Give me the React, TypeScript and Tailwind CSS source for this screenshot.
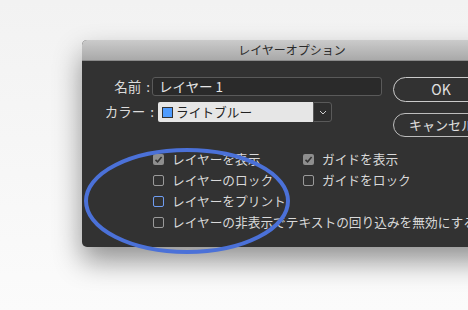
import React from 'react';

const font = { fontFamily: '"Noto Sans CJK JP", "Noto Sans", sans-serif' };

interface CheckProps {
    label: string;
    checked?: boolean;
    focused?: boolean;
}

const Check: React.FC<CheckProps> = ({ label, checked, focused }) => (
    <div className="flex items-center h-[21px] whitespace-nowrap">
        {checked ? (
            <span className="w-[11px] h-[11px] rounded-[2px] bg-[#8e8e8e] flex items-center justify-center flex-shrink-0">
                <svg width="9" height="9" viewBox="0 0 9 9">
                    <polyline points="1.5,4.8 3.6,6.8 7.6,2" fill="none" stroke="#333" strokeWidth="1.6" />
                </svg>
            </span>
        ) : (
            <span className={`w-[11px] h-[11px] rounded-[2px] border flex-shrink-0 ${focused ? 'border-[#6f9cf0]' : 'border-[#9a9a9a]'}`} />
        )}
        <span className="ml-[8px] text-[12.7px] text-[#d9d9d9] leading-none">{label}</span>
    </div>
);

const Label: React.FC<{ text: string; width: string }> = ({ text, width }) => (
    <span className={`${width} flex justify-end items-center text-[13.5px] text-[#dcdcdc] leading-none whitespace-nowrap`}>
        {text}
        <span className="ml-[5px]">:</span>
    </span>
);

export default function App() {
    return (
        <div className="relative w-[468px] h-[310px] overflow-hidden bg-gradient-to-b from-[#f2f2f2] to-[#fbfbfb] pl-[82px] pt-[40px]" style={font}>
            <div className="w-[420px] h-[207px] flex-shrink-0 rounded-[5px] overflow-hidden bg-[#323232] shadow-[0_14px_28px_rgba(0,0,0,0.42)] flex flex-col">
                <div className="h-[21px] bg-gradient-to-b from-[#cbcbcb] to-[#a9a9a9] border-b border-[#8a8a8a] flex items-center justify-center text-[12px] text-[#2b2b2b]">
                    レイヤーオプション
                </div>
                <div className="flex flex-1">
                    <div className="w-[311px] flex-shrink-0 pl-[24px]">
                        <div className="flex items-center h-[19px] mt-[16px]">
                            <Label text="名前" width="w-[44px]" />
                            <div className="ml-[2px] w-[230px] h-[19px] rounded-[3px] border border-[#5a5a5a] bg-[#2a2a2a] flex items-center px-[6px] text-[13.5px] text-[#e6e6e6] whitespace-nowrap">
                                レイヤー 1
                            </div>
                        </div>
                        <div className="flex items-center h-[20px] mt-[6px]">
                            <Label text="カラー" width="w-[48px]" />
                            <div className="ml-[4px] flex h-[20px]">
                                <div className="w-[155px] bg-[#e6e6e6] rounded-l-[2px] flex items-center pl-[4px]">
                                    <span className="w-[11px] h-[11px] bg-[#4f9cff] border border-[#333]" />
                                    <span className="ml-[3px] text-[12.7px] text-[#222] leading-none">ライトブルー</span>
                                </div>
                                <div className="w-[19px] border border-[#5a5a5a] rounded-r-[3px] bg-[#2e2e2e] flex items-center justify-center">
                                    <svg width="8" height="5" viewBox="0 0 8 5">
                                        <polyline points="1,1 4,4 7,1" fill="none" stroke="#cfcfcf" strokeWidth="1" />
                                    </svg>
                                </div>
                            </div>
                        </div>
                        <div className="mt-[27px] pl-[47px] grid grid-cols-[150px_1fr]">
                            <Check label="レイヤーを表示" checked />
                            <Check label="ガイドを表示" checked />
                            <Check label="レイヤーのロック" />
                            <Check label="ガイドをロック" />
                            <Check label="レイヤーをプリント" focused />
                            <div />
                            <div className="col-span-2">
                                <Check label="レイヤーの非表示でテキストの回り込みを無効にする" />
                            </div>
                        </div>
                    </div>
                    <div className="flex flex-col pt-[16px]">
                        <button className="w-[96px] h-[25px] rounded-full border-[1.5px] border-[#cacaca] text-[14px] text-[#e0e0e0] flex items-center justify-center">
                            OK
                        </button>
                        <button className="mt-[11px] w-[96px] h-[24px] rounded-full border border-[#bdbdbd] text-[13px] text-[#e0e0e0] flex items-center justify-start pl-[15px] whitespace-nowrap">
                            キャンセル
                        </button>
                    </div>
                </div>
            </div>
            <svg className="absolute left-0 top-0 pointer-events-none" width="468" height="310" viewBox="0 0 468 310">
                <ellipse cx="187" cy="201" rx="101" ry="51" fill="none" stroke="#4b71d8" strokeWidth="4" />
            </svg>
        </div>
    );
}
